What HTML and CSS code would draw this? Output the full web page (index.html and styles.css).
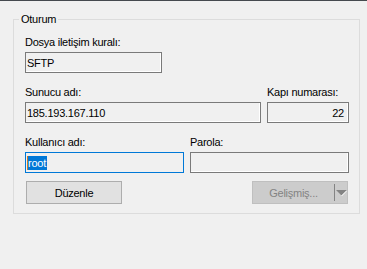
FILE: index.html
```html
<!DOCTYPE html>
<html lang="tr">
    <head>
        <meta charset="UTF-8">
        <title>Oturum</title>
        <link rel="stylesheet" href="styles.css">
    </head>
    <body>
        <div class="topline"></div>
        <fieldset class="group">
            <legend>Oturum</legend>
            <div class="field">
                <label>Dosya iletişim kuralı:</label>
                <div class="edit proto">SFTP</div>
            </div>
            <div class="row host-row">
                <div class="field">
                    <label>Sunucu adı:</label>
                    <div class="edit">185.193.167.110</div>
                </div>
                <div class="field">
                    <label>Kapı numarası:</label>
                    <div class="edit num">22</div>
                </div>
            </div>
            <div class="row user-row">
                <div class="field">
                    <label>Kullanıcı adı:</label>
                    <div class="edit focus"><span class="sel">root</span></div>
                </div>
                <div class="field">
                    <label>Parola:</label>
                    <div class="edit"></div>
                </div>
            </div>
            <div class="buttons">
                <button type="button" class="btn">Düzenle</button>
                <button type="button" class="btn split" disabled>
                    <span class="text">Gelişmiş...</span>
                    <span class="arrow">
                        <svg width="11" height="6" viewBox="0 0 11 6">
                            <polygon points="0,0 11,0 5.5,5.5" fill="#838383"/>
                            <line x1="11" y1="0.5" x2="5.5" y2="6" stroke="#fff" stroke-width="1"/>
                        </svg>
                    </span>
                </button>
            </div>
        </fieldset>
    </body>
</html>
```

FILE: styles.css
```css
* {
    margin: 0;
    padding: 0;
    box-sizing: border-box;
}

body {
    background: #f0f0f0;
    font-family: "Liberation Sans", Arial, sans-serif;
    font-size: 11px;
    letter-spacing: -0.25px;
    color: #000;
}

.topline {
    height: 1px;
    background: #45494e;
}

.group {
    margin: 11px 0 0 13px;
    width: 347px;
    border: 1px solid #dcdcdc;
    padding: 8px 10px 9px 11px;
}
.group legend {
    margin-left: -6px;
    padding: 0 2px;
    line-height: 15px;
}

.field label {
    display: block;
    line-height: 15px;
    margin-bottom: 2px;
}

.edit {
    height: 21px;
    border: 1px solid #7a7a7a;
    box-shadow: inset -1px -1px 0 #fff;
    background: #f0f0f0;
    display: flex;
    align-items: center;
    padding: 0 4px 0 1px;
    white-space: nowrap;
}
.proto {
    width: 137px;
}
.num {
    justify-content: flex-end;
}
.focus {
    border-color: #0078d7;
    box-shadow: none;
}
.sel {
    background: #0078d7;
    color: #fff;
    line-height: 14px;
    border-left: 1px solid #c8782a;
    padding-right: 1px;
}

.row {
    display: grid;
    gap: 6px;
    margin-top: 12px;
}
.host-row {
    grid-template-columns: 236px 82px;
}
.user-row {
    grid-template-columns: 159px 159px;
}

.buttons {
    display: flex;
    justify-content: space-between;
    padding: 0 1px;
    margin-top: 8px;
}

.btn {
    width: 96px;
    height: 23px;
    border: 1px solid #adadad;
    background: #e1e1e1;
    font: inherit;
    letter-spacing: inherit;
    color: #000;
}
.split {
    display: flex;
    align-items: center;
    background: #cccccc;
    border-color: #bfbfbf;
    color: #838383;
}
.split .text {
    width: 81px;
    text-align: center;
}
.split .arrow {
    display: flex;
    align-items: center;
    justify-content: center;
    flex: 1;
    height: 17px;
    border-left: 1px solid #838383;
}
```
